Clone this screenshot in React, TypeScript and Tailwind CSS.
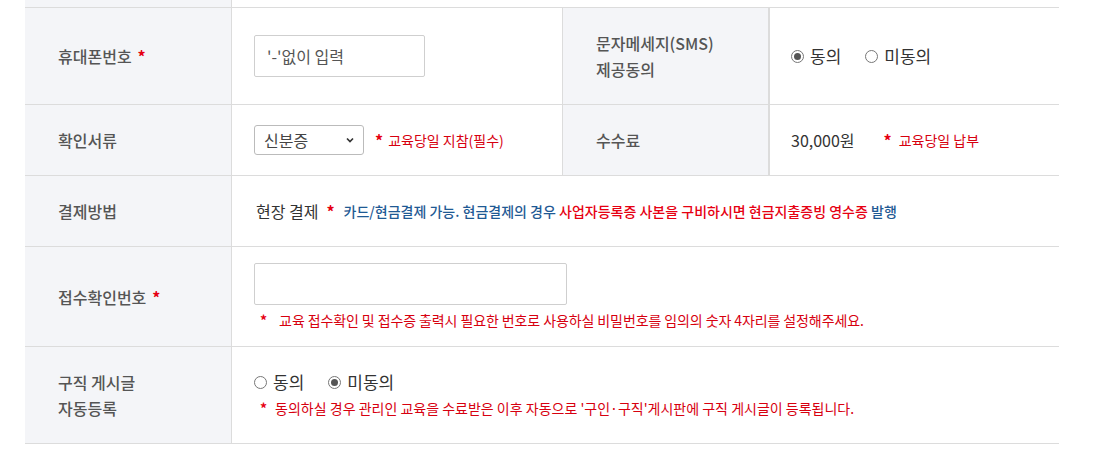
import React from "react";

const FONT = "'Noto Sans CJK KR', 'Noto Sans', sans-serif";

function Star({ className = "" }: { className?: string }) {
  return <span className={`text-[#e60012] font-bold ${className}`}>*</span>;
}

function Radio({ checked, label }: { checked: boolean; label: string }) {
  return (
    <label className="flex items-center gap-[6px]">
      <span className="w-[13px] h-[13px] rounded-full border border-[#777] bg-white flex items-center justify-center">
        {checked && <span className="w-[7px] h-[7px] rounded-full bg-[#555]" />}
      </span>
      <span className="text-[17px] text-[#333]">{label}</span>
    </label>
  );
}

function Label({ children }: { children: React.ReactNode }) {
  return (
    <div className="bg-[#f4f5f8] border-r border-[#dcdcdc] flex items-center pl-[33px] text-[16px] font-medium text-[#555] leading-[26px]">
      {children}
    </div>
  );
}

export default function App() {
  return (
    <div className="bg-white w-[1111px] h-[462px]" style={{ fontFamily: FONT }}>
      <div className="ml-[25px] w-[1034px]">
        {/* previous row tail */}
        <div className="grid grid-cols-[207px_827px] h-[8px] border-b border-[#dcdcdc]">
          <div className="bg-[#f4f5f8] border-r border-[#dcdcdc]" />
          <div />
        </div>

        {/* row 1 */}
        <div className="grid grid-cols-[207px_330px_208px_289px] h-[97px] border-b border-[#dcdcdc]">
          <Label>
            <span>휴대폰번호</span>
            <Star className="ml-[6px]" />
          </Label>
          <div className="flex items-center pl-[22px]">
            <div className="w-[171px] h-[42px] border border-[#cfcfcf] rounded-[2px] flex items-center pl-[12px] text-[16px] text-[#555]">
              '-'없이 입력
            </div>
          </div>
          <div className="bg-[#f4f5f8] border-l border-[#dcdcdc] border-r-2 border-r-[#dcdcdc] flex flex-col justify-center pl-[33px] text-[16px] font-medium text-[#555] leading-[26px]">
            <span>문자메세지(SMS)</span>
            <span>제공동의</span>
          </div>
          <div className="flex items-center pl-[21px] gap-[24px]">
            <Radio checked label="동의" />
            <Radio checked={false} label="미동의" />
          </div>
        </div>

        {/* row 2 */}
        <div className="grid grid-cols-[207px_330px_208px_289px] h-[71px] border-b border-[#dcdcdc]">
          <Label>확인서류</Label>
          <div className="flex items-center pl-[22px]">
            <div className="w-[110px] h-[30px] border border-[#bbb] rounded-[3px] flex items-center justify-between pl-[9px] pr-[8px] text-[16px] text-[#444]">
              <span>신분증</span>
              <svg width="10" height="10" viewBox="0 0 10 10">
                <path d="M2 3.5 L5 6.5 L8 3.5" fill="none" stroke="#333" strokeWidth="1.7" />
              </svg>
            </div>
            <Star className="ml-[11px] text-[16px]" />
            <span className="ml-[5px] text-[14px] text-[#d7000f]">교육당일 지참(필수)</span>
          </div>
          <div className="bg-[#f4f5f8] border-l border-[#dcdcdc] border-r-2 border-r-[#dcdcdc] flex items-center pl-[33px] text-[16px] font-medium text-[#555]">
            수수료
          </div>
          <div className="flex items-center pl-[21px]">
            <span className="text-[16px] text-[#333]">30,000원</span>
            <Star className="ml-[29px] text-[16px]" />
            <span className="ml-[7px] text-[14px] text-[#d7000f]">교육당일 납부</span>
          </div>
        </div>

        {/* row 3 */}
        <div className="grid grid-cols-[207px_827px] h-[71px] border-b border-[#dcdcdc]">
          <Label>결제방법</Label>
          <div className="flex items-center pl-[24px]">
            <span className="text-[16px] text-[#333]">현장 결제</span>
            <Star className="ml-[8px] text-[16px]" />
            <span className="ml-[9px] text-[14px] font-medium">
              <span className="text-[#1f5a94]">카드/현금결제 가능. 현금결제의 경우 </span>
              <span className="text-[#e60012]">사업자등록증 사본을 구비하시면 현금지출증빙 영수증 </span>
              <span className="text-[#1f5a94]">발행</span>
            </span>
          </div>
        </div>

        {/* row 4 */}
        <div className="grid grid-cols-[207px_827px] h-[100px] border-b border-[#dcdcdc]">
          <Label>
            <span>접수확인번호</span>
            <Star className="ml-[6px]" />
          </Label>
          <div className="flex flex-col justify-center pl-[22px] gap-[5px]">
            <div className="w-[313px] h-[42px] border border-[#cfcfcf] rounded-[2px] bg-white" />
            <div className="flex items-center pl-[6px] text-[14px] leading-[20px]">
              <Star />
              <span className="ml-[12px] text-[#d7000f] tracking-[-0.1px]">
                교육 접수확인 및 접수증 출력시 필요한 번호로 사용하실 비밀번호를 임의의 숫자 4자리를 설정해주세요.
              </span>
            </div>
          </div>
        </div>

        {/* row 5 */}
        <div className="grid grid-cols-[207px_827px] h-[97px] border-b border-[#dcdcdc]">
          <div className="bg-[#f4f5f8] border-r border-[#dcdcdc] flex flex-col justify-center pl-[33px] text-[16px] font-medium text-[#555] leading-[26px]">
            <span>구직 게시글</span>
            <span>자동등록</span>
          </div>
          <div className="flex flex-col justify-center pl-[22px]">
            <div className="flex items-center gap-[24px] h-[26px]">
              <Radio checked={false} label="동의" />
              <Radio checked label="미동의" />
            </div>
            <div className="flex items-center pl-[6px] text-[14px] h-[26px]">
              <Star />
              <span className="ml-[8px] text-[#d7000f]">
                동의하실 경우 관리인 교육을 수료받은 이후 자동으로 '구인·구직'게시판에 구직 게시글이 등록됩니다.
              </span>
            </div>
          </div>
        </div>
      </div>
    </div>
  );
}
